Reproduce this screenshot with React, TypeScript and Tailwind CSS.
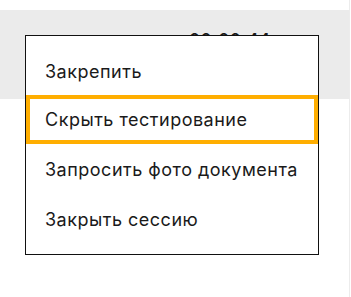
const items = [
  { label: 'Закрепить', h: 'h-[48px]' },
  { label: 'Скрыть тестирование', h: 'h-[49px]' },
  { label: 'Запросить фото документа', h: 'h-[51px]' },
  { label: 'Закрыть сессию', h: 'h-[49px]' },
]

export default function App() {
  return (
    <div
      className="relative flex h-[297px] w-[351px] bg-white text-[#1a1a1a]"
      style={{ fontFamily: 'Inter, "Noto Sans", sans-serif' }}
    >
      <div className="w-[349px]">
        <div className="mt-[10px] flex h-[89px] justify-end bg-[#ebebeb] pr-[78px] pt-[19px]">
          <span className="text-[16px] font-semibold leading-[20px] tracking-[1px]">
            00:00:44
          </span>
        </div>
      </div>
      <div className="w-[2px] border-l border-[#ececec]" />

      <div className="absolute left-[25px] top-[35px] flex h-[220px] w-[294px] flex-col border border-[#111] bg-white pt-[11px]">
        {items.map((item, i) => (
          <div
            key={item.label}
            className={
              'flex items-center text-[18px] tracking-[0.5px] ' +
              item.h +
              ' ' +
              (i === 1 ? 'border-4 border-[#ffae00] px-[15px]' : 'px-[19px]')
            }
          >
            {item.label}
          </div>
        ))}
      </div>
    </div>
  )
}
